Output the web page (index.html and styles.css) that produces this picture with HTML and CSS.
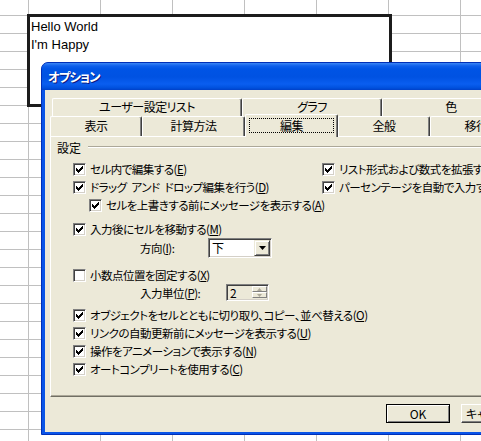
FILE: index.html
```html
<!DOCTYPE html>
<html lang="ja">
<head>
    <meta charset="UTF-8">
    <title>オプション</title>
    <link rel="stylesheet" href="styles.css">
</head>
<body>
<div class="sheet">
    <div class="textbox">Hello World<br>I'm Happy</div>

    <div class="dialog">
        <div class="titlebar">オプション</div>
        <div class="client">
            <div class="tabs">
                <div class="tabrow back">
                    <div class="tab w190">ユーザー設定リスト</div>
                    <div class="tab w140">グラフ</div>
                    <div class="tab w138">色</div>
                </div>
                <div class="tabrow front">
                    <div class="tab w92">表示</div>
                    <div class="tab w103">計算方法</div>
                    <div class="tab sel w93"><span class="focus">編集</span></div>
                    <div class="tab w92">全般</div>
                    <div class="tab w92">移行</div>
                </div>
            </div>

            <div class="panel">
                <div class="group"><span>設定</span><div class="etch"></div></div>

                <div class="opts">
                    <div class="twocol">
                        <div>
                            <div class="row"><span class="cb on"><svg viewBox="0 0 7 7"><path d="M6 0h1v1h-1zM5 1h2v1h-2zM0 2h1v1h-1zM4 2h3v1h-3zM0 3h2v1h-2zM3 3h3v1h-3zM0 4h5v1h-5zM1 5h3v1h-3zM2 6h1v1h-1z"/></svg></span>セル内で編集する(<u>E</u>)</div>
                            <div class="row"><span class="cb on"><svg viewBox="0 0 7 7"><path d="M6 0h1v1h-1zM5 1h2v1h-2zM0 2h1v1h-1zM4 2h3v1h-3zM0 3h2v1h-2zM3 3h3v1h-3zM0 4h5v1h-5zM1 5h3v1h-3zM2 6h1v1h-1z"/></svg></span>ドラッグ<span class="sp"></span>アンド<span class="sp"></span>ドロップ編集を行う(<u>D</u>)</div>
                            <div class="row sub"><span class="cb on"><svg viewBox="0 0 7 7"><path d="M6 0h1v1h-1zM5 1h2v1h-2zM0 2h1v1h-1zM4 2h3v1h-3zM0 3h2v1h-2zM3 3h3v1h-3zM0 4h5v1h-5zM1 5h3v1h-3zM2 6h1v1h-1z"/></svg></span>セルを上書きする前にメッセージを表示する(<u>A</u>)</div>
                        </div>
                        <div>
                            <div class="row"><span class="cb on"><svg viewBox="0 0 7 7"><path d="M6 0h1v1h-1zM5 1h2v1h-2zM0 2h1v1h-1zM4 2h3v1h-3zM0 3h2v1h-2zM3 3h3v1h-3zM0 4h5v1h-5zM1 5h3v1h-3zM2 6h1v1h-1z"/></svg></span>リスト形式および数式を拡張する(<u>L</u>)</div>
                            <div class="row"><span class="cb on"><svg viewBox="0 0 7 7"><path d="M6 0h1v1h-1zM5 1h2v1h-2zM0 2h1v1h-1zM4 2h3v1h-3zM0 3h2v1h-2zM3 3h3v1h-3zM0 4h5v1h-5zM1 5h3v1h-3zM2 6h1v1h-1z"/></svg></span>パーセンテージを自動で入力する(<u>P</u>)</div>
                        </div>
                    </div>

                    <div class="row mt6"><span class="cb on"><svg viewBox="0 0 7 7"><path d="M6 0h1v1h-1zM5 1h2v1h-2zM0 2h1v1h-1zM4 2h3v1h-3zM0 3h2v1h-2zM3 3h3v1h-3zM0 4h5v1h-5zM1 5h3v1h-3zM2 6h1v1h-1z"/></svg></span>入力後にセルを移動する(<u>M</u>)</div>
                    <div class="field dir">
                        <label>方向(<u>I</u>):</label>
                        <div class="combo">
                            <span class="val">下</span>
                            <span class="drop"><svg viewBox="0 0 7 4"><path d="M0 0h7l-3.5 4z"/></svg></span>
                        </div>
                    </div>

                    <div class="row mt8"><span class="cb"></span>小数点位置を固定する(<u>X</u>)</div>
                    <div class="field unit">
                        <label>入力単位(<u>P</u>):</label>
                        <div class="spin">
                            <span class="val">2</span>
                            <span class="arrows">
                                <span class="sbtn"><svg viewBox="0 0 5 3"><path d="M2.5 0L5 3H0z"/></svg></span>
                                <span class="sbtn"><svg viewBox="0 0 5 3"><path d="M0 0h5L2.5 3z"/></svg></span>
                            </span>
                        </div>
                    </div>

                    <div class="row mt5"><span class="cb on"><svg viewBox="0 0 7 7"><path d="M6 0h1v1h-1zM5 1h2v1h-2zM0 2h1v1h-1zM4 2h3v1h-3zM0 3h2v1h-2zM3 3h3v1h-3zM0 4h5v1h-5zM1 5h3v1h-3zM2 6h1v1h-1z"/></svg></span>オブジェクトをセルとともに切り取り、コピー、並べ替える(<u>O</u>)</div>
                    <div class="row"><span class="cb on"><svg viewBox="0 0 7 7"><path d="M6 0h1v1h-1zM5 1h2v1h-2zM0 2h1v1h-1zM4 2h3v1h-3zM0 3h2v1h-2zM3 3h3v1h-3zM0 4h5v1h-5zM1 5h3v1h-3zM2 6h1v1h-1z"/></svg></span>リンクの自動更新前にメッセージを表示する(<u>U</u>)</div>
                    <div class="row"><span class="cb on"><svg viewBox="0 0 7 7"><path d="M6 0h1v1h-1zM5 1h2v1h-2zM0 2h1v1h-1zM4 2h3v1h-3zM0 3h2v1h-2zM3 3h3v1h-3zM0 4h5v1h-5zM1 5h3v1h-3zM2 6h1v1h-1z"/></svg></span>操作をアニメーションで表示する(<u>N</u>)</div>
                    <div class="row"><span class="cb on"><svg viewBox="0 0 7 7"><path d="M6 0h1v1h-1zM5 1h2v1h-2zM0 2h1v1h-1zM4 2h3v1h-3zM0 3h2v1h-2zM3 3h3v1h-3zM0 4h5v1h-5zM1 5h3v1h-3zM2 6h1v1h-1z"/></svg></span>オートコンプリートを使用する(<u>C</u>)</div>
                </div>
            </div>

            <div class="buttons">
                <button class="btn def">OK</button>
                <button class="btn">キャンセル</button>
            </div>
        </div>
    </div>
</div>
</body>
</html>
```

FILE: styles.css
```css
html, body { margin: 0; padding: 0; }
body { width: 481px; height: 441px; overflow: hidden; background: #fff; }

.sheet {
    position: relative;
    width: 481px; height: 441px;
    background-color: #fff;
    background-image:
        linear-gradient(to right, #c0c0c0 1px, transparent 1px),
        linear-gradient(to bottom, #c0c0c0 1px, transparent 1px);
    background-size: 72px 18px;
    background-position: 28px 15px;
}

/* text box drawn on the sheet */
.textbox {
    position: absolute; left: 27px; top: 14px;
    width: 358px; height: 86px;
    border: 3px solid #1c1c1c;
    background: #fff;
    padding: 1px 0 0 1px;
    font: 13px/18px "Liberation Sans", Arial, sans-serif;
    color: #000;
}

/* dialog window */
.dialog {
    position: absolute; left: 41px; top: 62px;
    width: 520px; height: 373px;
    box-sizing: border-box;
    background: #0a55e8;
    border: 1px solid #0030b8;
    border-radius: 7px 7px 0 0;
    padding: 0 3px 2px 3px;
    display: flex; flex-direction: column;
}
.titlebar {
    height: 27px;
    margin: 0 -3px;
    padding-left: 6px;
    border-radius: 6px 6px 0 0;
    background: linear-gradient(to bottom, #3b86f5 0, #0e5feb 3px, #0054e5 6px, #0052e2 14px, #0a5ef0 21px, #0050dd 25px, #0040c8 27px);
    color: #fff;
    font: bold 12.5px/27px "Noto Sans CJK JP", sans-serif;
    font-feature-settings: "palt";
    letter-spacing: -1px;
    text-shadow: 1px 1px #0a1a80;
}
.client {
    flex: 1;
    background: #ece9d8;
    padding: 8px 0 0 5px;
    font: 11.5px "Noto Sans CJK JP", sans-serif;
    font-feature-settings: "palt";
    letter-spacing: -0.5px;
    color: #000;
}

/* tabs */
.tabrow { display: flex; }
.tabrow.back { height: 18px; margin-left: 2px; }
.tabrow.front { height: 20px; align-items: flex-end; }
.tab {
    box-sizing: border-box;
    flex: none;
    height: 100%;
    border-top: 1px solid #fff;
    border-left: 1px solid #fff;
    border-right: 1px solid #404040;
    box-shadow: inset -1px 0 #808080;
    border-radius: 2px 2px 0 0;
    text-align: center;
    font-size: 12px;
    line-height: 16px;
    white-space: nowrap;
    overflow: hidden;
}
.tabrow.front .tab { line-height: 18px; }
.w190 { width: 190px; }
.w140 { width: 140px; }
.w138 { width: 138px; }
.w92 { width: 92px; }
.w103 { width: 103px; }
.w93 { width: 93px; }
.tab.sel {
    position: relative; z-index: 1;
    height: 23px;
    margin-bottom: -1px;
    background: #ece9d8;
    padding-top: 3px;
}
.focus {
    display: block;
    margin: 0 3px;
    height: 13px;
    line-height: 13px;
    border: 1px dotted #000;
}

/* tab page */
.panel {
    box-sizing: border-box;
    height: 261px;
    border-top: 1px solid #fff;
    border-left: 1px solid #fff;
    border-bottom: 1px solid #716f64;
    box-shadow: inset 0 -1px #aca899;
    padding: 3px 0 0 6px;
}
.group { display: flex; align-items: center; height: 14px; font-size: 12px; letter-spacing: 0; }
.etch {
    flex: 1; margin-left: 7px;
    border-top: 1px solid #aca899;
    border-bottom: 1px solid #fff;
}
.opts { padding: 6px 0 0 16px; }
.twocol { display: grid; grid-template-columns: 249px 1fr; }
.row {
    display: flex; align-items: center;
    height: 18px;
    white-space: nowrap;
}
.row.sub { margin-left: 16px; }
.sp { display: inline-block; width: 5px; }
.mt5 { margin-top: 5px; }
.mt6 { margin-top: 6px; }
.mt8 { margin-top: 8px; }
u { text-decoration: underline; text-underline-offset: 1px; }

.cb {
    box-sizing: border-box;
    width: 13px; height: 13px;
    flex: none;
    margin-right: 4px;
    background: #fff;
    border: 1px solid;
    border-color: #808080 #fff #fff #808080;
    box-shadow: inset 1px 1px #404040, inset -1px -1px #d4d0c8;
    display: flex; align-items: center; justify-content: center;
}
.cb svg { width: 7px; height: 7px; shape-rendering: crispEdges; }

.field { display: flex; align-items: center; }
.field label { margin-left: 67px; }
.dir { height: 20px; }
.dir label { width: 68px; }
.unit { height: 17px; }
.unit label { width: 86px; }

.combo, .spin {
    box-sizing: border-box;
    display: flex;
    border: 1px solid;
    border-color: #808080 #fff #fff #808080;
    box-shadow: inset 1px 1px #404040, inset -1px -1px #d4d0c8;
    padding: 2px;
}
.combo { width: 64px; height: 20px; background: #fff; }
.val { flex: 1; padding-left: 1px; line-height: 14px; font-size: 12px; }
.drop {
    box-sizing: border-box;
    width: 16px; height: 16px;
    margin: -1px -1px 0 0;
    background: #ece9d8;
    border: 1px solid;
    border-color: #ece9d8 #404040 #404040 #ece9d8;
    box-shadow: inset 1px 1px #fff, inset -1px -1px #808080;
    display: flex; align-items: center; justify-content: center;
}
.drop svg { width: 7px; height: 4px; }
.spin { width: 43px; height: 17px; background: #ece9d8; }
.spin .val { line-height: 12px; color: #000; }
.arrows { display: flex; flex-direction: column; width: 15px; margin: -1px -1px 0 0; }
.sbtn {
    box-sizing: border-box;
    height: 7px;
    border: 1px solid;
    border-color: #fff #808080 #808080 #fff;
    display: flex; align-items: center; justify-content: center;
}
.sbtn svg { width: 5px; height: 3px; fill: #aca899; }

/* buttons */
.buttons { display: flex; gap: 11px; padding: 7px 0 0 336px; }
.btn {
    box-sizing: border-box;
    width: 64px; height: 19px;
    padding: 0;
    background: #ece9d8;
    font: 12px/15px "Noto Sans CJK JP", sans-serif;
    font-feature-settings: "palt";
    color: #000;
    border: 1px solid;
    border-color: #fff #404040 #404040 #fff;
    box-shadow: inset -1px -1px #808080;
}
.btn.def {
    border-color: #000;
    box-shadow: inset 1px 1px #fff, inset -1px -1px #808080;
}
```
